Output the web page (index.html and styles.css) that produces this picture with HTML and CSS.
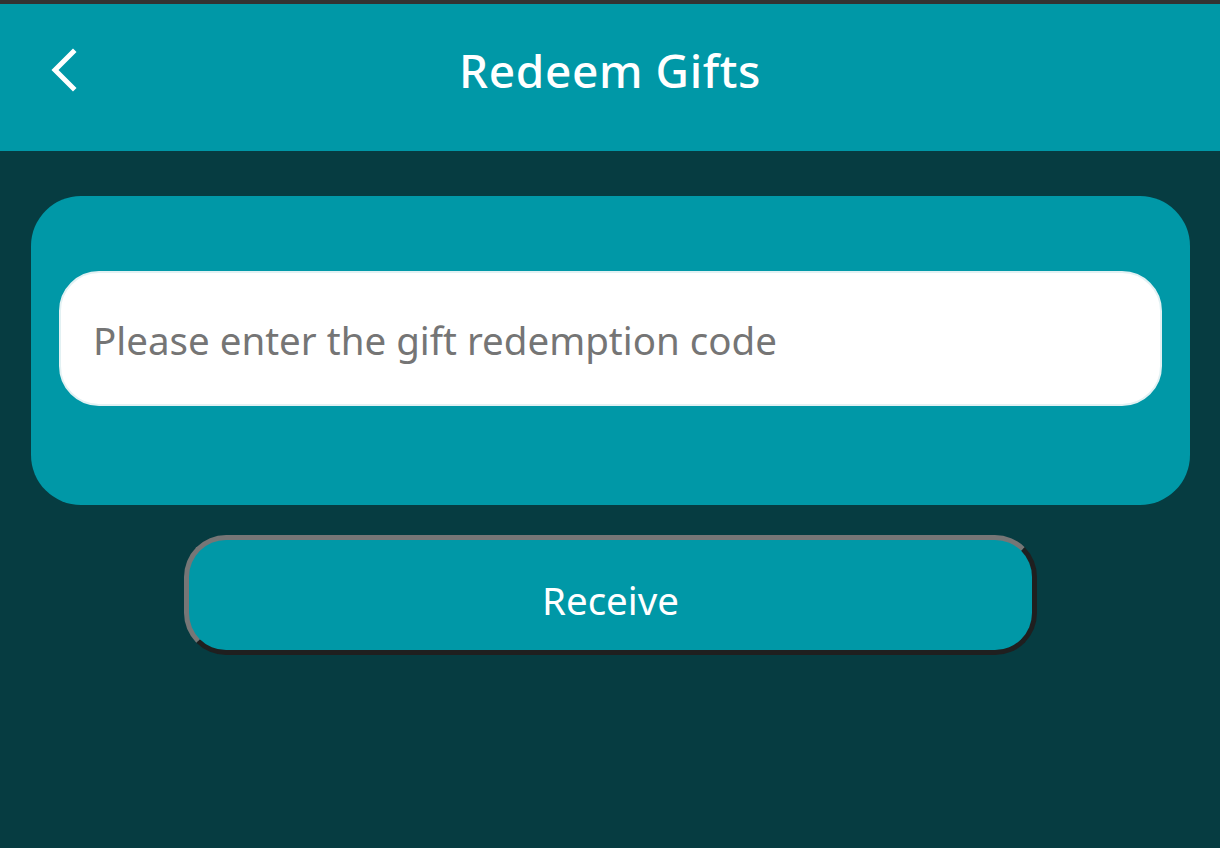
FILE: index.html
```html
<!DOCTYPE html>
<html lang="en">

<head>
    <meta charset="UTF-8">
    <meta name="viewport" content="width=device-width, initial-scale=1.0">
    <title>Redeem Gifts</title>
    <link rel="stylesheet" href="styles.css">
</head>

<body>
    <div class="topline"></div>
    <header class="header">
        <button class="back" aria-label="Back">
            <svg width="30" height="46" viewBox="0 0 30 46">
                <path d="M26 5 L8 23 L26 41" fill="none" stroke="#fff" stroke-width="5" stroke-linecap="square" />
            </svg>
        </button>
        <h1>Redeem Gifts</h1>
    </header>

    <main class="content">
        <div class="card">
            <input class="code-input" type="text" placeholder="Please enter the gift redemption code">
        </div>
        <button class="receive">Receive</button>
    </main>
</body>

</html>
```

FILE: styles.css
```css
body {
    margin: 0;
    height: 848px;
    background: #063c41;
    font-family: 'Noto Sans', sans-serif;
    overflow: hidden;
}

.topline {
    height: 4px;
    background: #333;
}

.header {
    height: 147px;
    background: #0098a7;
    display: flex;
    align-items: center;
    justify-content: center;
    position: relative;
}

.header h1 {
    margin: 0 0 16px;
    color: #fff;
    font-size: 46px;
    font-weight: 500;
    letter-spacing: 0.6px;
}

.back {
    position: absolute;
    left: 47px;
    top: 43px;
    background: none;
    border: none;
    padding: 0;
    cursor: pointer;
}

.content {
    padding: 45px 30px 0 31px;
    display: flex;
    flex-direction: column;
    align-items: center;
}

.card {
    align-self: stretch;
    height: 309px;
    box-sizing: border-box;
    background: #0098a7;
    border-radius: 50px;
    padding: 75px 28px 0;
}

.code-input {
    width: 100%;
    height: 135px;
    box-sizing: border-box;
    border: 2px solid #e2f1f3;
    border-radius: 40px;
    background: #fff;
    padding: 2px 32px 0;
    font-family: inherit;
    font-size: 38.5px;
    color: #333;
    outline: none;
}

.code-input::placeholder {
    color: #757575;
}

.receive {
    margin-top: 30px;
    width: 853px;
    height: 120px;
    box-sizing: border-box;
    background: #0098a7;
    border: 5px solid;
    border-color: #767676 #1f1f1f #1f1f1f #767676;
    border-radius: 42px;
    padding: 10px 0 0;
    color: #fff;
    font-family: inherit;
    font-size: 38.5px;
    cursor: pointer;
}
```
